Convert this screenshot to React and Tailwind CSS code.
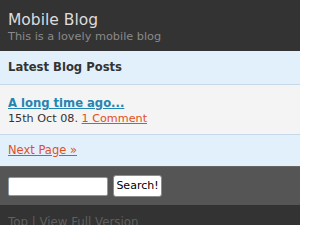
import React from "react";

const font = { fontFamily: '"DejaVu Sans", Verdana, sans-serif' };

export default function App() {
  return (
    <div className="w-[300px] h-[225px] overflow-hidden bg-[#333333]" style={font}>
      {/* Header */}
      <div className="h-[51px] bg-[#333333] px-2 pt-[11px]">
        <h1 className="text-[15.5px] leading-[19px] text-[#dcdcdc]">Mobile Blog</h1>
        <p className="text-[11.3px] leading-[14px] text-[#8a8a8a]">This is a lovely mobile blog</p>
      </div>

      {/* Section title */}
      <div className="h-[34px] bg-[#e2f0fb] border-b border-[#c5d9eb] px-2 flex items-center">
        <h2 className="text-[11.6px] font-bold text-[#333333]">Latest Blog Posts</h2>
      </div>

      {/* Post */}
      <div className="h-[50px] bg-[#f4f4f4] border-b border-[#c5d9eb] px-2 pt-[10px]">
        <a href="#" className="block text-[11.6px] leading-[16px] font-bold text-[#2585b2] underline">
          A long time ago...
        </a>
        <p className="text-[11.2px] leading-[15px] text-[#333333]">
          15th Oct 08. <a href="#" className="text-[#e0501e] underline">1 Comment</a>
        </p>
      </div>

      {/* Pagination */}
      <div className="h-[31px] bg-[#e2f0fb] px-2 flex items-center">
        <a href="#" className="text-[11.5px] text-[#e0501e] underline">Next Page »</a>
      </div>

      {/* Search */}
      <div className="h-[39px] bg-[#555555] border-t border-[#666666] px-2 flex items-center gap-[5px]">
        <input
          type="text"
          className="w-[100px] h-[19px] bg-white border border-[#8a9aa8] rounded-[2px] outline-none"
        />
        <button
          className="w-[49px] h-[22px] bg-white border border-[#8c8c8c] rounded-[3px] text-[11px] text-black"
          style={{ fontFamily: "Tahoma, 'DejaVu Sans', sans-serif" }}
        >
          Search!
        </button>
      </div>

      {/* Footer */}
      <div className="px-2 pt-[9px] text-[11.8px] text-[#5f5f5f]">
        Top | View Full Version
      </div>
    </div>
  );
}
